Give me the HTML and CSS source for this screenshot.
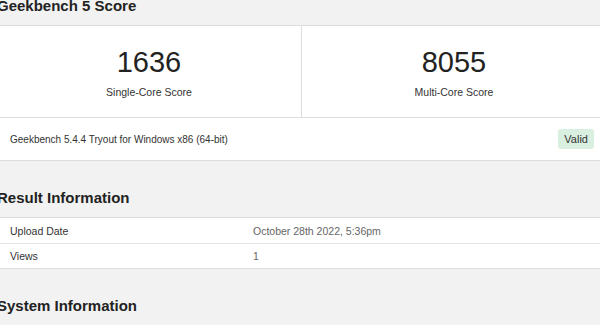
FILE: index.html
```html
<!DOCTYPE html>
<html lang="en">
<head>
    <meta charset="UTF-8">
    <meta name="viewport" content="width=device-width, initial-scale=1.0">
    <title>Geekbench 5 Score</title>
    <link rel="stylesheet" href="styles.css">
</head>
<body>
    <div class="page">
        <!-- Score card -->
        <h3 class="section-title">Geekbench 5 Score</h3>
        <div class="card">
            <div class="scores">
                <div class="score-cell">
                    <div class="score">1636</div>
                    <div class="score-label">Single-Core Score</div>
                </div>
                <div class="score-cell">
                    <div class="score">8055</div>
                    <div class="score-label">Multi-Core Score</div>
                </div>
            </div>
            <div class="version-row">
                <span>Geekbench 5.4.4 Tryout for Windows x86 (64-bit)</span>
                <span class="badge">Valid</span>
            </div>
        </div>

        <!-- Result info -->
        <h3 class="section-title spaced">Result Information</h3>
        <div class="card info-table">
            <div class="info-row">
                <div class="info-name">Upload Date</div>
                <div class="info-value">October 28th 2022, 5:36pm</div>
            </div>
            <div class="info-row">
                <div class="info-name">Views</div>
                <div class="info-value">1</div>
            </div>
        </div>

        <h3 class="section-title spaced">System Information</h3>
        <div class="card info-table"></div>
    </div>
</body>
</html>
```

FILE: styles.css
```css
* {
    margin: 0;
    padding: 0;
    box-sizing: border-box;
    font-family: 'Liberation Sans', Arial, sans-serif;
}

body {
    background-color: #f2f2f2;
    color: #333;
    overflow: hidden;
}

.page {
    width: 609px;
    margin: -4px 0 0 -3px;
}

.section-title {
    font-size: 15px;
    font-weight: bold;
    line-height: 20px;
    color: #222;
    margin-bottom: 9px;
}

.section-title.spaced {
    margin-top: 27px;
}

.card {
    background-color: #fff;
    border: 1px solid #ddd;
    border-width: 1px 0;
}

.card:empty {
    height: 10px;
}

.scores {
    display: grid;
    grid-template-columns: 304px 305px;
    border-bottom: 1px solid #ddd;
}

.score-cell {
    padding: 18px 0 18px;
    text-align: center;
}

.score-cell + .score-cell {
    border-left: 1px solid #ddd;
}

.score {
    font-size: 29px;
    line-height: 36px;
    color: #222;
}

.score-label {
    font-size: 10.5px;
    line-height: 14px;
    margin-top: 5px;
    color: #333;
}

.version-row {
    display: flex;
    justify-content: space-between;
    align-items: center;
    height: 42px;
    padding: 0 12px 0 13px;
    font-size: 10px;
}

.badge {
    background-color: #d9efdf;
    color: #333;
    border-radius: 3px;
    padding: 0 6px;
    line-height: 20px;
    font-size: 11px;
}

.info-row {
    display: flex;
    height: 25px;
    align-items: center;
    font-size: 10.5px;
    padding-left: 13px;
}

.info-row + .info-row {
    border-top: 1px solid #e4e4e4;
}

.info-name {
    width: 243px;
}

.info-value {
    color: #666;
}
```
